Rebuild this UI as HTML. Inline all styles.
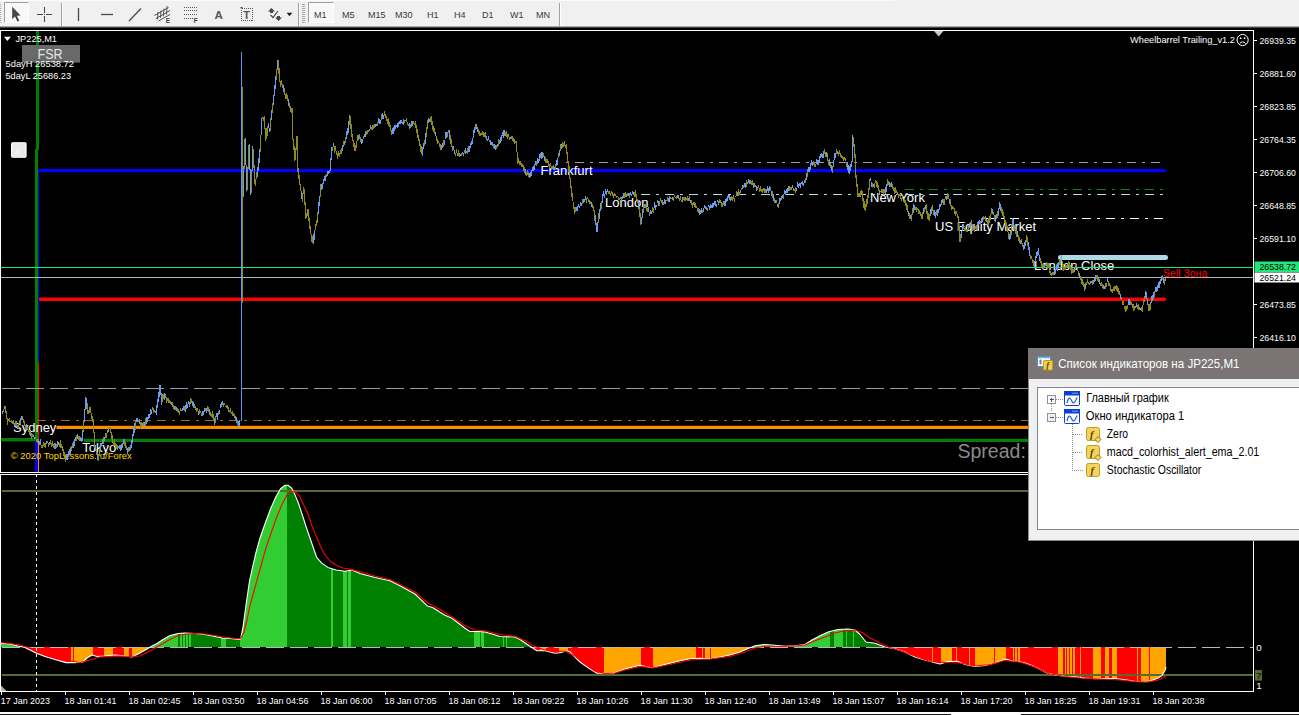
<!DOCTYPE html>
<html><head><meta charset="utf-8"><title>JP225,M1</title>
<style>
html,body{margin:0;padding:0;background:#f0f0f0;}
body{width:1299px;height:715px;position:relative;overflow:hidden;font-family:"Liberation Sans",Arial,sans-serif;}
#chart{position:absolute;left:0;top:0;}
#tb{position:absolute;left:0;top:0;width:1299px;height:26px;background:#f0f0f0;}
#tbsh{position:absolute;left:0;top:25px;width:1299px;height:3px;background:linear-gradient(#f6f6f6 0,#f6f6f6 33.3%,#a4a4a4 33.4%,#a4a4a4 66.6%,#464646 66.7%,#464646 100%);}
#tbhl{position:absolute;left:0;top:0;width:895px;height:1px;background:#fbfbfb;}
.btn{position:absolute;top:2px;height:21px;border:1px solid;border-color:#a0a0a0 #fff #fff #a0a0a0;background:#f8f8f8;box-sizing:border-box;}
.sep{position:absolute;top:3px;width:1px;height:22.5px;background:#a0a0a0;border-right:1px solid #fff;}
.tf{position:absolute;top:8.8px;font-size:9.8px;line-height:12px;transform:scaleX(.925);transform-origin:0 0;color:#3a3a3a;white-space:nowrap;}
#tabs{position:absolute;left:0;top:712px;width:1299px;height:3px;background:#fff;border-bottom:1px solid #1a1a1a;box-sizing:border-box;}
#tabs i{position:absolute;left:951px;top:0;width:70px;height:3px;background:#fff;}
#dlg{position:absolute;left:1028px;top:348px;width:272px;height:193px;background:#f0f0f0;border-left:1px solid #8a8a8a;border-bottom:1px solid #8a8a8a;box-sizing:border-box;}
#dlg .title{position:absolute;left:-1px;top:0;width:272px;height:31px;background:#7a7574;color:#fff;font-size:12.3px;}
#dlg .title span{position:absolute;left:30px;top:7.5px;line-height:14px;white-space:nowrap;}
#dlg .list{position:absolute;left:8px;top:38.5px;width:270px;height:143px;background:#fff;border:1px solid #828790;box-sizing:border-box;}
.row{position:absolute;font-size:12.1px;line-height:14px;color:#000;white-space:nowrap;}
</style></head><body>
<div id="tb"></div><div id="tbhl"></div><div id="tbsh"></div>
<svg id="chart" width="1299" height="715" viewBox="0 0 1299 715">
<rect x="0" y="28" width="1299" height="684" fill="#000"/>
<path d="M38 168.9H1164.5L1167 170.6L1164.5 172.3H38Z" fill="#0000ff"/>
<path d="M38.5 297.4H1164.5L1167 299.2L1164.5 301H38.5Z" fill="#ff0000"/>
<rect x="56.5" y="425.8" width="980" height="3.2" fill="#ff8c00"/>
<rect x="1" y="438" width="35" height="3.3" fill="#008000"/>
<rect x="84" y="438.9" width="1169" height="3.1" fill="#008000"/>
<rect x="1058" y="255" width="110" height="5" rx="2.5" fill="#add8e6"/>
<g shape-rendering="crispEdges">
<rect x="36" y="31" width="3" height="119" fill="#008000"/>
<rect x="35" y="149" width="3" height="292" fill="#008000"/>
<rect x="38" y="172" width="1" height="190" fill="#0000ff"/>
<rect x="38" y="362" width="1" height="79" fill="#ff0000"/>
<rect x="35" y="441" width="3" height="31" fill="#0000ff"/>
<rect x="38" y="441" width="1" height="31" fill="#ff8c00"/>
<rect x="241" y="52" width="1" height="369" fill="#6495ed"/>
<rect x="242" y="87" width="1" height="216" fill="#8c8720"/>
</g>
<text x="540.5" y="174.6" font-size="13" fill="#fff" font-family="Liberation Sans, Arial, sans-serif" >Frankfurt</text>
<text x="605" y="207" font-size="13" fill="#fff" font-family="Liberation Sans, Arial, sans-serif" >London</text>
<text x="870" y="202" font-size="13" fill="#fff" font-family="Liberation Sans, Arial, sans-serif" >New York</text>
<text x="935" y="231" font-size="13" fill="#fff" font-family="Liberation Sans, Arial, sans-serif" >US Equity Market</text>
<text x="1034" y="270" font-size="13" fill="#fff" font-family="Liberation Sans, Arial, sans-serif" >London Close</text>
<text x="13" y="432.4" font-size="13" fill="#fff" font-family="Liberation Sans, Arial, sans-serif" >Sydney</text>
<text x="82.3" y="452.4" font-size="13" fill="#fff" font-family="Liberation Sans, Arial, sans-serif" >Tokyo</text>
<text x="1163" y="277.3" font-size="10.5" fill="#ff0000" font-family="Liberation Sans, Arial, sans-serif" >Sell Зона</text>
<text x="10.8" y="458.7" font-size="9.3" fill="#ffd700" font-family="Liberation Sans, Arial, sans-serif" textLength="121" lengthAdjust="spacingAndGlyphs">© 2020 TopLessons.ru/Forex</text>
<g shape-rendering="crispEdges">
<rect x="0" y="30" width="1254" height="1" fill="#fff"/>
<rect x="0" y="30" width="1" height="662" fill="#fff"/>
<rect x="1253" y="30" width="1" height="662" fill="#fff"/>
<rect x="0" y="472" width="1254" height="1" fill="#fff"/>
<rect x="0" y="474" width="1254" height="1" fill="#fff"/>
<rect x="0" y="691" width="1254" height="1" fill="#fff"/>
<rect x="1" y="691" width="1" height="4" fill="#fff"/>
<rect x="65" y="691" width="1" height="4" fill="#fff"/>
<rect x="129" y="691" width="1" height="4" fill="#fff"/>
<rect x="193" y="691" width="1" height="4" fill="#fff"/>
<rect x="257" y="691" width="1" height="4" fill="#fff"/>
<rect x="321" y="691" width="1" height="4" fill="#fff"/>
<rect x="385" y="691" width="1" height="4" fill="#fff"/>
<rect x="449" y="691" width="1" height="4" fill="#fff"/>
<rect x="513" y="691" width="1" height="4" fill="#fff"/>
<rect x="577" y="691" width="1" height="4" fill="#fff"/>
<rect x="641" y="691" width="1" height="4" fill="#fff"/>
<rect x="705" y="691" width="1" height="4" fill="#fff"/>
<rect x="769" y="691" width="1" height="4" fill="#fff"/>
<rect x="833" y="691" width="1" height="4" fill="#fff"/>
<rect x="897" y="691" width="1" height="4" fill="#fff"/>
<rect x="961" y="691" width="1" height="4" fill="#fff"/>
<rect x="1025" y="691" width="1" height="4" fill="#fff"/>
<rect x="1089" y="691" width="1" height="4" fill="#fff"/>
<rect x="1153" y="691" width="1" height="4" fill="#fff"/>
<rect x="1254" y="40" width="3" height="1" fill="#fff"/>
<rect x="1254" y="73" width="3" height="1" fill="#fff"/>
<rect x="1254" y="106" width="3" height="1" fill="#fff"/>
<rect x="1254" y="139" width="3" height="1" fill="#fff"/>
<rect x="1254" y="172" width="3" height="1" fill="#fff"/>
<rect x="1254" y="205" width="3" height="1" fill="#fff"/>
<rect x="1254" y="238" width="3" height="1" fill="#fff"/>
<rect x="1254" y="304" width="3" height="1" fill="#fff"/>
<rect x="1254" y="337" width="3" height="1" fill="#fff"/>
<line x1="2" y1="388.5" x2="1253" y2="388.5" stroke="#9c9c9c" stroke-width="1" stroke-dasharray="18 6"/>
<rect x="1" y="267" width="1252" height="1" fill="#22e67a"/>
<rect x="1" y="277" width="1252" height="1" fill="#b4b4b4"/>
<line x1="37" y1="420.5" x2="1253" y2="420.5" stroke="#b0623a" stroke-width="1" stroke-dasharray="9 6 3 6"/>
<line x1="566" y1="162.5" x2="1161" y2="162.5" stroke="#a0a0a0" stroke-width="1" stroke-dasharray="9 6 3 6" stroke-dashoffset="14.75"/>
<line x1="905" y1="189.5" x2="1165" y2="189.5" stroke="#008c00" stroke-width="1" stroke-dasharray="9 6 3 6"/>
<line x1="641" y1="194.5" x2="1165" y2="194.5" stroke="#b6dce8" stroke-width="1" stroke-dasharray="9 6 3 6"/>
<line x1="986" y1="218.5" x2="1165" y2="218.5" stroke="#ffffff" stroke-width="1.4" stroke-dasharray="9 6 3 6"/>
</g>
<path d="M2.5 410.5V414.3M4.5 406.2V409.2M14.5 422.8V427.2M17.5 425.4V429.2M20.5 417.7V424.8M21.5 415.7V419.9M26.5 424.4V431.0M30.5 431.2V436.2M33.5 434.8V437.1M34.5 437.0V438.7M38.5 439.4V442.6M39.5 440.9V445.4M40.5 439.3V444.8M46.5 441.1V444.3M49.5 442.3V444.7M55.5 443.2V448.8M57.5 441.1V447.0M58.5 441.7V444.7M66.5 454.6V460.1M67.5 455.1V460.3M68.5 451.4V456.7M69.5 449.3V454.9M70.5 447.0V453.8M73.5 441.2V448.3M74.5 439.0V445.6M75.5 437.4V440.7M77.5 433.8V439.3M80.5 436.6V440.5M81.5 438.0V442.1M82.5 429.8V441.4M84.5 409.2V422.4M85.5 397.3V410.4M86.5 398.2V409.1M95.5 445.3V451.1M97.5 451.6V459.6M100.5 443.1V451.5M101.5 442.9V446.0M102.5 439.2V443.8M104.5 436.8V441.3M107.5 429.9V432.6M108.5 428.7V432.3M119.5 444.6V449.4M120.5 445.4V450.9M121.5 443.8V449.5M122.5 443.1V447.6M123.5 438.7V443.7M127.5 448.3V453.5M129.5 447.3V451.4M130.5 445.4V450.1M131.5 439.9V447.8M132.5 434.3V443.4M133.5 427.4V435.8M134.5 423.3V432.5M136.5 417.6V422.1M137.5 418.4V421.8M139.5 418.8V423.8M142.5 422.7V425.7M144.5 422.0V426.7M146.5 416.8V424.4M147.5 417.4V421.8M148.5 413.9V418.8M149.5 413.8V417.8M150.5 408.9V415.1M151.5 409.9V413.8M154.5 409.6V412.2M155.5 410.7V413.3M156.5 404.7V415.4M157.5 399.2V407.9M158.5 391.7V402.3M159.5 385.2V396.5M160.5 385.4V394.5M161.5 393.0V404.9M164.5 392.6V399.5M171.5 402.1V405.4M174.5 405.9V410.2M176.5 406.9V410.8M181.5 409.5V411.4M182.5 407.7V411.3M183.5 405.7V409.5M185.5 405.4V412.4M186.5 402.2V408.5M187.5 403.5V407.5M188.5 401.3V404.1M189.5 401.9V406.8M192.5 401.4V406.3M193.5 402.2V407.9M198.5 410.5V415.4M202.5 411.4V415.8M203.5 410.5V414.7M204.5 408.3V412.1M206.5 408.3V412.7M209.5 408.9V414.7M214.5 418.1V424.8M216.5 413.2V417.4M217.5 412.8V419.8M219.5 409.5V413.9M220.5 404.2V408.2M221.5 401.5V407.4M222.5 401.4V404.9M235.5 415.5V420.2M236.5 417.2V422.6M238.5 421.4V426.3M239.5 420.3V427.1M243.5 166.4V196.6M245.5 137.9V165.2M246.5 165.1V190.8M249.5 143.7V169.9M250.5 168.6V195.2M252.5 146.3V171.2M257.5 167.3V176.6M258.5 157.8V171.3M259.5 149.2V162.9M261.5 118.2V135.1M268.5 123.4V128.4M269.5 128.0V132.1M271.5 110.2V119.7M273.5 95.0V104.7M274.5 85.3V95.9M275.5 76.4V88.8M277.5 59.6V69.6M283.5 84.8V92.1M288.5 99.4V105.6M301.5 190.9V198.8M313.5 233.5V244.1M314.5 229.7V239.5M318.5 201.6V214.2M319.5 195.6V206.1M321.5 184.3V189.7M322.5 182.8V188.8M323.5 178.7V183.6M324.5 176.1V180.9M325.5 174.9V181.3M327.5 171.4V176.2M328.5 170.7V174.4M329.5 170.4V173.4M330.5 157.8V171.3M331.5 147.1V160.2M333.5 143.0V147.2M342.5 145.4V150.5M344.5 140.6V145.4M346.5 131.4V138.9M347.5 128.2V134.6M348.5 121.2V132.6M358.5 135.1V139.7M361.5 139.4V143.5M362.5 139.2V143.3M364.5 133.5V137.3M365.5 130.9V136.7M369.5 128.6V131.0M370.5 125.3V129.2M375.5 124.3V127.0M376.5 123.6V126.4M378.5 118.0V122.8M379.5 119.1V123.7M380.5 120.3V124.3M382.5 112.5V118.5M383.5 115.0V119.1M392.5 128.4V134.0M393.5 126.6V133.7M394.5 124.5V130.7M395.5 125.2V128.5M396.5 125.2V126.9M397.5 122.5V127.6M398.5 122.4V126.9M399.5 121.1V124.0M400.5 120.4V123.8M401.5 120.2V123.4M402.5 121.8V123.8M403.5 119.1V124.8M409.5 123.3V128.8M411.5 121.3V126.7M412.5 120.8V125.6M422.5 146.8V155.6M423.5 142.5V148.7M425.5 132.9V143.7M428.5 117.6V122.7M429.5 118.7V122.4M435.5 131.6V136.3M441.5 144.6V149.9M442.5 143.4V147.5M444.5 139.9V145.1M445.5 132.1V138.7M446.5 132.1V138.4M449.5 129.7V139.7M453.5 146.0V150.3M454.5 150.0V153.8M460.5 154.4V156.2M462.5 151.8V154.1M463.5 153.4V155.5M465.5 148.4V153.5M466.5 150.7V153.1M468.5 146.3V152.2M469.5 145.8V152.0M470.5 143.4V147.5M471.5 140.5V145.2M472.5 137.6V144.0M473.5 129.8V138.0M474.5 127.2V133.4M476.5 124.3V128.7M477.5 126.5V131.8M486.5 135.5V139.6M487.5 138.7V141.2M488.5 135.9V139.5M490.5 139.7V144.7M491.5 141.5V145.3M492.5 142.3V146.1M494.5 143.8V149.0M495.5 145.0V150.3M497.5 143.6V146.9M499.5 139.6V143.7M500.5 137.3V143.3M501.5 135.3V140.5M502.5 131.8V136.0M503.5 130.3V137.6M504.5 129.5V135.7M510.5 137.0V138.9M525.5 168.6V174.5M529.5 173.2V177.9M530.5 171.5V176.8M531.5 169.5V175.9M532.5 166.5V170.6M533.5 165.8V171.4M534.5 163.5V169.8M535.5 160.7V164.7M537.5 158.3V163.9M538.5 158.6V162.7M539.5 154.4V160.7M540.5 153.3V157.5M541.5 151.7V158.7M542.5 152.0V157.8M544.5 155.7V160.8M553.5 165.1V170.2M554.5 166.6V170.0M556.5 159.9V166.1M557.5 158.0V164.7M559.5 150.2V156.2M561.5 143.7V149.0M576.5 207.2V211.4M577.5 205.8V211.2M578.5 204.2V207.4M579.5 205.7V208.2M580.5 201.6V205.5M581.5 203.2V205.9M583.5 198.6V202.6M584.5 199.2V201.9M585.5 195.7V200.0M591.5 202.2V207.1M595.5 215.1V224.6M596.5 222.5V232.0M597.5 222.4V231.5M599.5 209.4V218.8M600.5 203.1V210.7M602.5 194.4V202.9M603.5 190.9V195.9M604.5 193.5V197.9M605.5 189.4V194.2M606.5 190.6V194.6M607.5 189.0V191.9M617.5 195.7V197.1M620.5 196.7V199.4M622.5 196.4V198.5M623.5 192.7V197.7M626.5 194.0V197.4M628.5 193.3V195.6M630.5 192.3V194.6M631.5 193.5V196.0M632.5 190.5V193.9M633.5 192.3V195.3M638.5 200.1V208.6M641.5 216.6V224.0M642.5 208.7V218.0M644.5 203.8V207.7M648.5 207.3V212.1M650.5 209.8V213.6M651.5 210.7V213.9M654.5 202.4V207.5M655.5 204.8V209.7M656.5 204.5V206.7M657.5 199.7V203.2M658.5 201.4V206.2M662.5 199.9V205.0M664.5 198.8V203.7M665.5 199.7V204.4M668.5 198.0V202.1M669.5 196.3V202.3M672.5 196.8V199.6M677.5 194.5V197.7M678.5 195.3V198.8M682.5 197.4V201.6M688.5 198.2V200.7M690.5 200.2V202.9M699.5 208.8V214.5M700.5 209.7V214.1M701.5 207.8V212.7M703.5 208.0V212.0M704.5 205.3V207.7M705.5 205.6V209.2M706.5 206.8V210.1M708.5 205.4V206.9M709.5 206.4V209.6M710.5 204.0V207.8M711.5 204.5V208.1M712.5 203.3V208.1M713.5 202.5V207.1M714.5 201.4V205.0M715.5 201.4V206.1M716.5 203.6V207.1M717.5 200.1V201.6M718.5 201.1V205.0M724.5 201.2V206.0M725.5 199.1V206.4M726.5 198.3V202.0M727.5 196.4V201.3M728.5 194.6V198.4M729.5 194.7V199.9M730.5 197.0V200.5M737.5 192.1V196.2M740.5 190.3V193.1M742.5 184.9V188.9M744.5 182.8V187.4M745.5 183.0V188.1M747.5 181.6V184.2M748.5 179.0V182.8M749.5 180.3V183.5M753.5 183.1V187.5M755.5 184.8V186.9M756.5 185.5V190.9M766.5 188.7V193.0M767.5 186.4V190.5M768.5 187.9V193.3M769.5 186.3V191.3M771.5 190.8V196.1M773.5 193.9V200.7M775.5 199.5V203.1M777.5 203.5V206.7M779.5 198.2V204.1M780.5 197.5V201.4M781.5 195.7V200.2M782.5 194.6V198.2M784.5 189.9V194.1M785.5 190.6V194.6M786.5 189.4V192.6M787.5 188.0V192.5M788.5 186.2V190.8M792.5 185.1V188.3M796.5 188.2V191.1M797.5 182.0V186.9M798.5 183.7V188.2M799.5 182.7V185.6M800.5 182.5V187.6M801.5 181.9V184.2M802.5 181.2V184.8M803.5 182.6V186.4M804.5 179.5V182.5M806.5 172.6V180.3M808.5 166.5V172.4M809.5 167.3V172.2M810.5 163.4V170.1M811.5 159.6V165.3M812.5 161.5V166.3M816.5 159.0V163.9M817.5 160.4V164.7M818.5 159.9V164.9M819.5 156.2V161.8M820.5 154.3V158.4M821.5 152.5V157.4M822.5 153.9V158.1M823.5 151.0V157.8M826.5 152.4V157.1M829.5 158.8V166.4M831.5 164.7V170.9M833.5 159.9V166.6M834.5 152.8V160.3M835.5 152.7V157.5M837.5 150.7V154.4M847.5 162.4V170.0M848.5 165.1V172.9M849.5 166.0V173.7M850.5 163.9V171.3M851.5 161.1V167.0M852.5 135.1V162.1M870.5 177.9V181.3M871.5 182.4V187.1M873.5 184.4V186.8M879.5 189.9V194.9M885.5 187.0V194.4M886.5 183.8V192.0M889.5 182.2V187.4M891.5 182.1V186.6M908.5 210.5V216.3M910.5 214.8V218.6M913.5 204.4V213.0M914.5 205.3V209.7M923.5 207.8V214.3M925.5 204.5V208.6M930.5 208.5V215.7M931.5 207.3V213.8M934.5 210.3V215.8M935.5 212.3V218.1M937.5 209.3V216.3M938.5 209.2V213.0M939.5 203.9V209.9M940.5 203.5V206.7M941.5 200.4V205.3M942.5 199.3V203.2M946.5 196.1V200.1M949.5 198.9V204.1M961.5 231.1V237.8M962.5 224.1V231.2M963.5 224.4V229.0M969.5 223.3V227.7M970.5 222.2V226.8M973.5 225.1V229.3M977.5 222.4V228.1M978.5 220.8V225.3M979.5 220.2V224.2M981.5 218.3V221.8M982.5 217.3V221.5M986.5 219.0V221.9M992.5 208.8V213.7M995.5 215.3V222.2M996.5 213.7V218.5M998.5 207.6V215.6M999.5 202.4V209.0M1000.5 204.0V211.0M1009.5 234.1V240.3M1010.5 231.4V238.8M1012.5 218.1V226.9M1013.5 219.1V225.7M1017.5 231.2V237.0M1020.5 239.8V244.3M1023.5 245.1V249.8M1024.5 241.6V249.1M1025.5 240.4V246.2M1028.5 241.5V249.8M1029.5 247.2V256.3M1034.5 260.7V266.8M1035.5 255.5V261.6M1036.5 251.8V258.3M1037.5 251.3V256.1M1038.5 248.1V254.9M1039.5 254.8V260.7M1044.5 264.4V266.6M1045.5 263.9V265.8M1054.5 270.1V275.3M1055.5 269.1V274.3M1056.5 264.6V270.4M1057.5 264.4V271.1M1058.5 262.2V266.9M1061.5 255.0V261.4M1067.5 262.6V266.7M1074.5 267.7V271.9M1076.5 264.2V267.9M1079.5 272.6V277.3M1085.5 282.5V288.5M1091.5 281.4V283.2M1093.5 279.6V284.2M1094.5 277.7V281.7M1095.5 275.4V280.7M1099.5 279.4V283.6M1103.5 284.6V289.1M1104.5 285.9V289.1M1107.5 277.8V281.8M1120.5 293.6V299.0M1128.5 299.4V304.8M1129.5 298.8V305.0M1135.5 305.5V308.3M1136.5 303.1V307.4M1140.5 307.5V310.2M1145.5 291.4V298.4M1146.5 291.7V298.6M1147.5 298.5V305.0M1151.5 295.9V303.4M1152.5 294.9V300.8M1153.5 292.2V298.7M1155.5 287.2V292.1M1156.5 286.7V292.1M1157.5 284.7V291.3M1158.5 282.0V288.4M1159.5 281.4V287.6M1160.5 279.1V284.4M1161.5 276.3V281.1M1163.5 276.9V282.9M1165.5 278.0V281.3" stroke="#6a9cf0" stroke-width="1" fill="none" shape-rendering="crispEdges"/>
<path d="M3.5 409.3V412.1M5.5 406.4V413.3M6.5 410.7V419.1M7.5 418.2V425.0M8.5 419.4V420.9M9.5 418.3V421.8M10.5 420.8V421.5M11.5 420.3V423.3M12.5 420.5V424.4M13.5 419.8V423.7M15.5 421.3V424.8M16.5 421.1V426.0M18.5 422.9V428.6M19.5 420.0V424.3M22.5 416.4V420.0M23.5 418.6V423.4M24.5 420.6V426.3M25.5 424.6V429.3M27.5 427.0V430.0M28.5 429.6V432.1M29.5 429.5V435.3M31.5 433.3V439.2M32.5 433.8V436.7M35.5 436.6V438.7M36.5 439.4V441.6M37.5 439.4V443.0M41.5 444.6V447.7M42.5 444.7V448.0M43.5 441.7V446.0M44.5 443.2V446.8M45.5 442.8V448.0M47.5 440.6V442.9M48.5 442.6V447.1M50.5 440.3V443.9M51.5 442.6V447.0M52.5 440.8V446.2M53.5 444.4V447.5M54.5 443.2V449.2M56.5 443.6V447.6M59.5 442.6V446.9M60.5 440.3V447.8M61.5 443.9V448.4M62.5 446.3V450.8M63.5 449.1V455.6M64.5 451.5V458.9M65.5 457.5V462.4M71.5 445.8V450.9M72.5 443.3V448.3M76.5 435.2V440.9M78.5 435.5V440.0M79.5 436.2V441.4M83.5 419.9V431.8M87.5 403.3V413.6M88.5 410.3V413.7M89.5 407.0V412.5M90.5 407.2V413.4M91.5 413.1V419.2M92.5 416.4V421.8M93.5 419.1V432.6M94.5 431.9V447.6M96.5 449.0V455.3M98.5 453.7V460.5M99.5 448.1V455.6M103.5 437.3V443.8M105.5 433.2V438.1M106.5 432.9V438.0M109.5 426.5V429.2M110.5 427.3V432.5M111.5 431.7V439.4M112.5 435.2V442.9M113.5 442.0V446.3M114.5 438.8V445.4M115.5 442.8V447.3M116.5 443.6V449.1M117.5 444.5V449.7M118.5 446.4V447.9M124.5 439.0V445.8M125.5 441.5V448.1M126.5 446.1V449.5M128.5 447.0V451.5M135.5 420.5V429.5M138.5 419.8V422.4M140.5 422.3V427.7M141.5 422.1V426.9M143.5 421.6V425.7M145.5 418.2V425.8M152.5 407.3V410.0M153.5 408.2V412.9M162.5 394.0V402.0M163.5 394.1V399.0M165.5 393.9V397.8M166.5 396.8V402.5M167.5 397.5V401.2M168.5 397.6V402.8M169.5 399.7V403.2M170.5 400.9V403.6M172.5 402.0V407.3M173.5 405.0V408.5M175.5 405.8V410.3M177.5 407.7V411.5M178.5 408.8V413.0M179.5 411.0V414.8M180.5 407.5V411.1M184.5 406.4V410.5M190.5 398.2V404.1M191.5 399.4V403.2M194.5 404.1V408.4M195.5 405.5V410.4M196.5 408.2V412.1M197.5 408.2V410.6M199.5 409.1V413.6M200.5 410.6V413.2M201.5 412.9V416.3M205.5 407.5V411.0M207.5 406.2V410.6M208.5 406.9V411.5M210.5 412.1V416.3M211.5 413.5V416.6M212.5 411.4V417.6M213.5 413.9V420.2M215.5 415.9V423.3M218.5 410.6V415.0M223.5 403.2V406.7M224.5 403.1V405.3M225.5 405.5V407.1M226.5 404.8V408.0M227.5 405.0V409.0M228.5 406.9V412.1M229.5 409.8V411.9M230.5 408.4V413.3M231.5 411.5V413.6M232.5 411.4V415.6M233.5 412.8V416.2M234.5 413.5V417.8M237.5 419.9V424.9M244.5 139.0V169.4M247.5 166.9V189.7M248.5 144.8V168.6M251.5 170.4V193.4M253.5 149.0V168.0M254.5 165.2V183.5M255.5 178.9V185.9M256.5 172.4V179.4M260.5 134.9V151.5M262.5 117.3V119.1M263.5 117.0V120.7M264.5 116.2V129.1M265.5 128.0V140.9M266.5 128.0V138.6M267.5 126.1V135.7M270.5 117.7V131.2M272.5 103.0V112.9M276.5 69.0V79.9M278.5 60.0V73.9M279.5 68.1V82.1M280.5 81.1V86.6M281.5 80.1V84.5M282.5 83.9V88.1M284.5 88.3V94.6M285.5 94.3V99.0M286.5 93.0V99.3M287.5 94.5V100.6M289.5 102.8V108.2M290.5 106.2V112.2M291.5 108.3V113.4M292.5 108.4V140.0M293.5 139.0V150.1M294.5 146.1V160.9M295.5 148.2V160.0M296.5 136.4V150.3M297.5 135.5V171.9M298.5 167.7V179.0M299.5 174.8V184.5M300.5 183.6V191.3M302.5 193.3V201.6M303.5 186.9V194.3M304.5 188.5V204.9M305.5 202.2V218.8M306.5 212.5V218.2M307.5 209.1V216.3M308.5 209.3V220.9M309.5 218.1V228.7M310.5 226.2V234.1M311.5 233.6V242.2M312.5 235.6V242.8M315.5 223.7V229.6M316.5 219.9V225.9M317.5 211.5V223.1M320.5 184.4V197.2M326.5 173.5V177.1M332.5 146.8V151.2M334.5 146.3V152.9M335.5 146.4V151.0M336.5 150.9V154.6M337.5 152.9V158.5M338.5 151.3V156.1M339.5 152.5V157.2M340.5 149.7V154.3M341.5 147.9V154.0M343.5 141.1V147.3M345.5 136.8V143.3M349.5 115.0V124.8M350.5 116.2V129.4M351.5 124.0V136.5M352.5 133.5V141.2M353.5 140.2V146.5M354.5 143.2V150.7M355.5 144.6V151.3M356.5 140.8V148.2M357.5 134.9V141.2M359.5 133.7V138.7M360.5 137.2V142.2M363.5 136.1V139.0M366.5 131.0V134.7M367.5 130.1V133.9M368.5 130.2V131.7M371.5 126.8V130.3M372.5 125.3V130.1M373.5 125.1V128.8M374.5 124.0V128.0M377.5 121.5V125.6M381.5 114.2V119.7M384.5 111.0V116.4M385.5 113.6V118.3M386.5 115.6V121.4M387.5 119.0V123.6M388.5 118.3V125.9M389.5 122.4V127.4M390.5 125.2V130.7M391.5 129.6V134.6M404.5 120.3V123.0M405.5 119.6V121.1M406.5 118.1V122.2M407.5 121.6V124.9M408.5 124.1V126.1M410.5 123.8V127.8M413.5 120.9V124.2M414.5 122.6V124.7M415.5 120.8V127.7M416.5 125.0V133.1M417.5 129.1V138.3M418.5 135.3V140.8M419.5 138.5V146.2M420.5 143.7V152.0M421.5 146.0V154.0M424.5 139.5V146.3M426.5 126.5V137.4M427.5 120.1V128.8M430.5 117.1V121.8M431.5 116.4V124.6M432.5 121.4V130.1M433.5 125.5V131.6M434.5 128.0V133.6M436.5 136.4V140.6M437.5 138.8V143.7M438.5 140.8V143.1M439.5 142.5V147.3M440.5 144.1V149.8M443.5 139.7V146.6M447.5 131.9V136.9M448.5 129.8V132.6M450.5 134.9V143.8M451.5 139.0V146.7M452.5 145.6V150.6M455.5 153.3V156.0M456.5 149.3V153.1M457.5 152.5V155.9M458.5 150.3V155.7M459.5 153.4V157.2M461.5 153.2V155.9M464.5 149.9V153.3M467.5 147.8V154.0M475.5 123.5V130.1M478.5 128.9V134.4M479.5 130.7V135.5M480.5 133.3V135.5M481.5 132.5V134.9M482.5 131.1V134.6M483.5 131.5V136.5M484.5 132.8V136.6M485.5 132.1V138.3M489.5 139.9V141.9M493.5 144.3V148.0M496.5 144.7V148.9M498.5 139.4V145.9M505.5 131.8V135.9M506.5 131.0V136.7M507.5 133.5V138.7M508.5 133.5V136.6M509.5 136.7V139.9M511.5 136.3V139.3M512.5 136.1V141.1M513.5 138.3V141.9M514.5 139.2V143.7M515.5 140.6V143.2M516.5 140.9V151.9M517.5 152.3V163.8M518.5 157.5V162.5M519.5 160.8V164.9M520.5 160.9V164.7M521.5 162.7V167.4M522.5 163.8V167.3M523.5 165.2V171.2M524.5 167.1V172.7M526.5 172.0V175.6M527.5 169.5V175.2M528.5 171.9V177.4M536.5 161.0V166.3M543.5 153.0V157.2M545.5 157.0V162.6M546.5 158.9V162.6M547.5 159.3V163.2M548.5 161.1V165.8M549.5 164.4V167.7M550.5 163.4V166.2M551.5 166.0V170.2M552.5 165.6V168.7M555.5 163.5V169.3M558.5 152.6V157.6M560.5 144.4V151.3M562.5 142.0V148.1M563.5 143.0V146.8M564.5 141.3V145.8M565.5 144.9V147.7M566.5 143.7V154.3M567.5 152.4V163.3M568.5 160.7V171.8M569.5 169.3V179.2M570.5 177.7V187.7M571.5 186.4V197.1M572.5 192.9V200.7M573.5 201.9V209.1M574.5 207.0V214.1M575.5 206.9V212.3M582.5 199.3V204.0M586.5 198.1V203.3M587.5 197.4V199.1M588.5 199.4V202.3M589.5 200.3V204.0M590.5 200.7V204.4M592.5 204.2V208.4M593.5 206.0V211.4M594.5 210.4V220.5M598.5 212.5V222.5M601.5 200.5V208.7M608.5 190.8V193.9M609.5 190.8V193.7M610.5 193.3V196.0M611.5 190.8V194.1M612.5 192.2V195.6M613.5 193.7V197.9M614.5 193.2V195.9M615.5 193.7V195.7M616.5 195.7V197.7M618.5 196.6V199.6M619.5 197.5V200.0M621.5 196.7V200.8M624.5 193.1V197.8M625.5 192.3V197.3M627.5 192.7V195.9M629.5 193.0V198.0M634.5 191.7V196.5M635.5 190.4V196.5M636.5 193.8V199.7M637.5 199.0V203.3M639.5 205.7V216.5M640.5 212.8V224.9M643.5 205.5V212.6M645.5 204.0V208.3M646.5 206.7V211.2M647.5 207.8V212.3M649.5 211.7V215.6M652.5 206.6V212.2M653.5 207.9V212.8M659.5 200.5V205.8M660.5 197.8V201.4M661.5 199.6V202.9M663.5 202.1V204.6M666.5 199.5V201.3M667.5 197.4V200.9M670.5 196.7V199.0M671.5 198.3V199.4M673.5 197.1V201.0M674.5 194.6V196.6M675.5 197.0V198.3M676.5 195.6V198.9M679.5 198.2V200.5M680.5 196.4V199.8M681.5 199.9V202.0M683.5 196.8V200.2M684.5 197.4V200.6M685.5 197.2V201.2M686.5 197.5V199.7M687.5 195.9V200.7M689.5 196.4V200.8M691.5 200.4V204.5M692.5 203.3V208.0M693.5 202.0V205.4M694.5 202.3V206.9M695.5 203.2V208.4M696.5 206.2V208.3M697.5 208.3V211.5M698.5 207.5V213.0M702.5 210.2V212.8M707.5 208.0V210.6M719.5 199.2V202.6M720.5 199.6V203.4M721.5 202.3V206.9M722.5 203.1V206.8M723.5 201.4V205.1M731.5 196.2V199.6M732.5 197.4V201.0M733.5 194.6V198.7M734.5 198.0V201.6M735.5 196.1V197.3M736.5 191.4V196.0M738.5 189.4V195.5M739.5 192.2V194.8M741.5 188.3V190.0M743.5 184.5V187.5M746.5 180.4V186.6M750.5 179.5V184.1M751.5 181.1V185.4M752.5 180.0V184.9M754.5 182.7V187.2M757.5 186.8V190.3M758.5 184.5V188.0M759.5 188.0V191.9M760.5 186.3V190.7M761.5 188.9V192.0M762.5 189.3V192.6M763.5 187.5V190.6M764.5 188.4V192.5M765.5 189.1V192.7M770.5 187.0V190.8M772.5 190.7V197.9M774.5 198.0V203.1M776.5 199.7V203.1M778.5 203.4V207.9M783.5 194.2V198.8M789.5 185.7V190.7M790.5 187.4V190.1M791.5 187.1V190.2M793.5 188.3V190.8M794.5 188.8V191.0M795.5 186.8V192.5M805.5 177.8V183.1M807.5 169.2V176.5M813.5 160.9V165.3M814.5 162.1V166.6M815.5 164.4V166.9M824.5 149.2V153.9M825.5 151.9V156.5M827.5 153.1V160.7M828.5 160.1V165.1M830.5 163.1V168.3M832.5 165.7V172.8M836.5 149.0V154.3M838.5 151.7V155.5M839.5 150.1V153.9M840.5 153.4V157.0M841.5 154.8V157.9M842.5 155.5V159.0M843.5 156.5V161.1M844.5 156.5V160.0M845.5 157.5V161.0M846.5 161.8V167.3M853.5 136.9V147.2M854.5 143.7V158.3M855.5 154.4V178.2M856.5 175.0V187.0M857.5 184.4V196.5M858.5 192.9V197.2M859.5 193.2V197.1M860.5 191.2V196.7M861.5 190.0V194.6M862.5 191.2V201.2M863.5 198.3V207.8M864.5 200.5V210.0M865.5 204.4V211.3M866.5 199.2V207.1M867.5 195.0V204.3M868.5 187.8V197.6M869.5 178.7V190.4M872.5 183.1V186.6M874.5 183.3V187.6M875.5 179.8V183.1M876.5 181.1V186.7M877.5 181.6V187.9M878.5 185.2V191.3M880.5 190.9V192.1M881.5 189.0V192.5M882.5 188.9V193.4M883.5 189.2V194.7M884.5 189.4V193.0M887.5 178.8V185.6M888.5 180.9V185.0M890.5 182.9V187.1M892.5 183.5V188.8M893.5 187.1V191.0M894.5 188.1V193.6M895.5 186.7V192.7M896.5 189.7V193.2M897.5 192.1V195.0M898.5 194.1V198.1M899.5 193.8V196.4M900.5 194.8V199.2M901.5 197.7V200.5M902.5 195.9V199.0M903.5 199.6V202.2M904.5 197.5V202.7M905.5 199.8V205.9M906.5 202.6V210.0M907.5 204.6V212.1M909.5 213.0V218.5M911.5 213.5V221.1M912.5 208.1V215.3M915.5 207.1V210.2M916.5 207.0V211.8M917.5 207.5V210.2M918.5 208.6V214.2M919.5 210.3V214.1M920.5 212.0V216.3M921.5 214.1V219.3M922.5 211.9V218.7M924.5 207.4V212.0M926.5 203.8V213.8M927.5 211.3V219.0M928.5 212.6V220.0M929.5 213.9V221.2M932.5 204.8V210.5M933.5 210.1V214.6M936.5 210.3V214.8M943.5 199.2V205.2M944.5 198.6V204.5M945.5 196.4V198.6M947.5 193.1V199.0M948.5 193.9V199.0M950.5 199.3V206.3M951.5 205.1V210.0M952.5 205.6V209.0M953.5 206.7V209.1M954.5 207.8V214.4M955.5 210.5V215.7M956.5 211.3V213.9M957.5 213.7V218.0M958.5 215.6V230.9M959.5 226.1V241.5M960.5 234.1V241.7M964.5 227.6V230.6M965.5 227.0V231.1M966.5 228.9V232.2M967.5 229.0V232.1M968.5 224.9V230.4M971.5 219.5V224.7M972.5 224.3V230.5M974.5 227.7V232.2M975.5 225.6V229.4M976.5 225.1V229.7M980.5 220.5V224.1M983.5 216.1V219.6M984.5 216.7V219.3M985.5 216.3V220.9M987.5 219.5V225.2M988.5 217.9V224.6M989.5 215.5V223.3M990.5 214.4V219.7M991.5 208.3V214.4M993.5 211.5V215.0M994.5 214.6V221.2M997.5 211.1V218.0M1001.5 206.9V213.0M1002.5 208.5V215.7M1003.5 211.9V217.6M1004.5 215.6V222.5M1005.5 219.6V226.9M1006.5 224.6V230.9M1007.5 225.7V231.7M1008.5 232.1V239.0M1011.5 224.3V234.5M1014.5 224.6V231.0M1015.5 228.5V234.4M1016.5 229.8V236.6M1018.5 234.8V240.9M1019.5 236.9V242.6M1021.5 239.0V244.0M1022.5 242.5V247.1M1026.5 234.5V241.8M1027.5 236.9V245.8M1030.5 255.3V258.5M1031.5 256.2V259.4M1032.5 259.3V263.0M1033.5 260.4V266.2M1040.5 257.5V263.0M1041.5 261.4V267.6M1042.5 263.7V266.9M1043.5 263.8V269.1M1046.5 262.2V265.5M1047.5 262.6V268.5M1048.5 262.8V268.2M1049.5 266.4V272.5M1050.5 270.6V275.0M1051.5 272.5V275.9M1052.5 271.7V275.3M1053.5 272.1V275.1M1059.5 258.5V265.3M1060.5 259.6V265.4M1062.5 260.7V267.7M1063.5 263.8V271.2M1064.5 266.5V270.0M1065.5 264.8V270.3M1066.5 265.3V267.9M1068.5 261.0V265.7M1069.5 261.5V267.5M1070.5 265.3V269.8M1071.5 267.5V273.5M1072.5 269.0V273.3M1073.5 269.2V272.5M1075.5 264.3V268.3M1077.5 266.9V271.1M1078.5 270.7V276.0M1080.5 275.9V280.1M1081.5 276.9V283.5M1082.5 278.7V284.6M1083.5 281.7V287.3M1084.5 284.2V290.8M1086.5 281.7V284.9M1087.5 278.6V282.6M1088.5 282.3V283.8M1089.5 282.7V285.1M1090.5 280.6V284.1M1092.5 280.4V285.3M1096.5 274.7V279.1M1097.5 274.7V280.8M1098.5 278.2V282.3M1100.5 282.6V285.6M1101.5 282.3V285.9M1102.5 283.7V287.7M1105.5 283.0V289.2M1106.5 282.7V286.5M1108.5 280.5V286.2M1109.5 282.7V286.4M1110.5 284.9V290.6M1111.5 288.9V292.3M1112.5 288.8V292.9M1113.5 286.5V291.2M1114.5 285.5V290.7M1115.5 285.9V289.0M1116.5 285.0V290.5M1117.5 285.9V291.6M1118.5 287.5V294.3M1119.5 291.0V295.1M1121.5 296.6V299.9M1122.5 300.9V304.5M1123.5 301.4V305.3M1124.5 306.0V309.4M1125.5 305.7V311.7M1126.5 306.4V310.7M1127.5 305.2V308.5M1130.5 301.1V304.5M1131.5 301.6V305.3M1132.5 304.0V307.6M1133.5 304.1V311.0M1134.5 306.3V310.0M1137.5 305.1V308.6M1138.5 304.2V309.6M1139.5 306.6V309.9M1141.5 307.4V311.4M1142.5 304.9V311.9M1143.5 299.2V305.1M1144.5 295.5V301.7M1148.5 303.7V311.2M1149.5 304.0V311.0M1150.5 302.2V309.5M1154.5 291.4V297.3M1162.5 275.1V279.6M1164.5 278.7V284.5" stroke="#8f8a1e" stroke-width="1" fill="none" shape-rendering="crispEdges"/>
<g shape-rendering="crispEdges">
</g>
<path d="M1.0 647.0L1.0 643.3L10.0 644.0L18.0 646.0L25.0 647.4L25.0 647.0ZM150.0 647.0L150.0 647.2L152.0 646.0L157.0 643.5L163.0 639.5L170.0 635.5L178.0 633.5L178.0 647.0ZM180.0 647.0L180.0 633.4L181.5 633.2L181.5 647.0ZM183.0 647.0L183.0 633.1L184.5 633.0L184.5 647.0ZM186.0 647.0L186.0 633.0L187.5 633.1L187.5 647.0ZM189.0 647.0L189.0 633.2L191.0 633.3L191.0 647.0ZM221.0 647.0L221.0 637.8L222.0 638.0L226.0 638.2L226.0 647.0ZM240.0 647.0L240.0 639.5L240.7 638.6L243.0 627.0L245.0 612.6L247.0 598.0L249.5 581.4L252.6 567.0L256.0 552.5L260.0 538.0L265.0 523.7L270.4 509.3L275.7 497.2L280.5 488.8L285.0 485.2L287.0 485.2L287.0 647.0ZM331.0 647.0L331.0 568.4L333.4 569.2L333.4 647.0ZM343.0 647.0L343.0 571.0L345.0 571.3L346.5 571.0L346.5 647.0ZM347.5 647.0L347.5 570.8L351.0 570.2L351.0 647.0ZM474.0 647.0L474.0 631.5L478.0 631.5L479.5 631.6L479.5 647.0ZM480.5 647.0L480.5 631.7L483.5 631.9L483.5 647.0ZM502.5 647.0L502.5 636.6L504.0 636.6L504.0 647.0ZM505.5 647.0L505.5 636.7L506.5 636.7L506.5 647.0ZM751.0 647.0L751.0 647.3L755.0 645.7L765.0 644.5L775.0 645.2L785.0 646.2L795.0 645.7L805.0 644.5L812.0 640.0L820.0 635.7L828.0 632.0L830.0 631.5L830.0 647.0ZM834.0 647.0L834.0 630.5L838.0 629.5L843.0 629.2L843.0 647.0ZM846.0 647.0L846.0 629.1L847.0 629.0L847.0 647.0ZM853.0 647.0L853.0 629.7L854.0 629.9L854.0 647.0Z" fill="#32cd32" shape-rendering="crispEdges"/>
<path d="M25.0 647.0L25.0 647.4L36.0 653.0L45.0 656.5L55.0 659.5L66.0 662.6L71.0 662.6L71.0 647.0ZM72.5 647.0L72.5 662.6L74.0 662.6L74.0 647.0ZM93.0 647.0L93.0 655.3L97.0 656.5L104.0 656.1L104.0 647.0ZM113.0 647.0L113.0 655.2L115.0 655.0L124.0 655.9L124.0 647.0ZM129.0 647.0L129.0 656.6L132.0 657.0L132.0 647.0ZM531.0 647.0L531.0 646.8L537.0 650.7L540.0 650.7L540.0 647.0ZM546.0 647.0L546.0 651.0L555.0 653.2L559.0 652.8L559.0 647.0ZM568.0 647.0L568.0 651.1L570.0 652.0L580.0 662.0L590.0 669.0L597.0 673.2L603.5 673.2L603.5 647.0ZM640.5 647.0L640.5 665.3L650.0 667.5L652.5 667.7L652.5 647.0ZM696.0 647.0L696.0 658.4L700.0 658.2L702.0 658.3L702.0 647.0ZM703.0 647.0L703.0 658.4L704.5 658.4L704.5 647.0ZM709.5 647.0L709.5 658.7L710.0 658.7L711.0 658.5L711.0 647.0ZM886.0 647.0L886.0 647.2L895.0 648.7L905.0 652.0L915.0 657.0L925.0 660.0L932.0 661.9L932.0 647.0ZM933.0 647.0L933.0 662.2L935.0 662.7L940.0 664.0L940.5 663.8L940.5 647.0ZM951.5 647.0L951.5 661.4L956.0 661.2L956.0 647.0ZM957.0 647.0L957.0 661.2L965.0 664.5L969.0 665.3L969.0 647.0ZM970.0 647.0L970.0 665.5L975.0 666.5L975.0 647.0ZM994.0 647.0L994.0 663.2L995.0 663.0L995.0 647.0ZM1006.0 647.0L1006.0 659.4L1007.0 659.2L1012.0 661.0L1012.5 661.0L1012.5 647.0ZM1014.0 647.0L1014.0 661.2L1015.0 661.3L1015.0 647.0ZM1016.5 647.0L1016.5 661.4L1017.5 661.5L1017.5 647.0ZM1019.5 647.0L1019.5 661.7L1020.0 661.7L1025.0 663.0L1032.0 665.5L1040.0 669.2L1047.0 673.0L1055.0 675.0L1057.5 675.3L1057.5 647.0ZM1063.0 647.0L1063.0 676.0L1064.5 676.1L1064.5 647.0ZM1066.0 647.0L1066.0 676.2L1067.0 676.3L1067.0 647.0ZM1068.5 647.0L1068.5 676.4L1070.0 676.5L1070.0 647.0ZM1071.5 647.0L1071.5 676.5L1072.5 676.6L1072.5 647.0ZM1075.0 647.0L1075.0 676.7L1079.5 677.3L1079.5 647.0ZM1081.0 647.0L1081.0 677.5L1085.0 678.0L1093.0 678.6L1093.0 647.0ZM1100.5 647.0L1100.5 678.6L1105.0 678.5L1105.0 647.0ZM1108.5 647.0L1108.5 678.5L1112.0 678.5L1112.0 647.0ZM1117.0 647.0L1117.0 678.7L1125.0 679.7L1135.0 681.2L1137.0 681.3L1137.0 647.0ZM1138.0 647.0L1138.0 681.4L1141.0 681.5L1141.0 647.0ZM1149.0 647.0L1149.0 681.0L1150.0 680.8L1150.0 647.0Z" fill="#ff0000" shape-rendering="crispEdges"/>
<path d="M71.0 647.0L71.0 662.6L72.5 662.6L72.5 647.0ZM74.0 647.0L74.0 662.6L75.0 662.6L83.0 662.0L87.0 658.0L92.0 655.0L93.0 655.3L93.0 647.0ZM104.0 647.0L104.0 656.1L105.0 656.0L113.0 655.2L113.0 647.0ZM124.0 647.0L124.0 655.9L125.0 656.0L129.0 656.6L129.0 647.0ZM132.0 647.0L132.0 657.0L140.0 653.0L147.0 649.0L150.0 647.2L150.0 647.0ZM540.0 647.0L540.0 650.7L545.0 650.7L546.0 651.0L546.0 647.0ZM559.0 647.0L559.0 652.8L560.0 652.7L567.0 650.7L568.0 651.1L568.0 647.0ZM603.5 647.0L603.5 673.2L613.0 673.2L625.0 669.0L640.0 665.2L640.5 665.3L640.5 647.0ZM652.5 647.0L652.5 667.7L653.0 667.7L660.0 665.7L670.0 663.2L680.0 660.7L690.0 658.7L696.0 658.4L696.0 647.0ZM702.0 647.0L702.0 658.3L703.0 658.4L703.0 647.0ZM704.5 647.0L704.5 658.4L709.5 658.7L709.5 647.0ZM711.0 647.0L711.0 658.5L720.0 657.0L730.0 655.0L740.0 652.0L750.0 647.7L751.0 647.3L751.0 647.0ZM932.0 647.0L932.0 661.9L933.0 662.2L933.0 647.0ZM940.5 647.0L940.5 663.8L948.0 661.5L951.5 661.4L951.5 647.0ZM956.0 647.0L956.0 661.2L957.0 661.2L957.0 647.0ZM969.0 647.0L969.0 665.3L970.0 665.5L970.0 647.0ZM975.0 647.0L975.0 666.5L985.0 665.5L994.0 663.2L994.0 647.0ZM995.0 647.0L995.0 663.0L1003.0 660.0L1006.0 659.4L1006.0 647.0ZM1012.5 647.0L1012.5 661.0L1014.0 661.2L1014.0 647.0ZM1015.0 647.0L1015.0 661.3L1016.5 661.4L1016.5 647.0ZM1017.5 647.0L1017.5 661.5L1019.5 661.7L1019.5 647.0ZM1057.5 647.0L1057.5 675.3L1063.0 676.0L1063.0 647.0ZM1064.5 647.0L1064.5 676.1L1065.0 676.2L1066.0 676.2L1066.0 647.0ZM1067.0 647.0L1067.0 676.3L1068.5 676.4L1068.5 647.0ZM1070.0 647.0L1070.0 676.5L1071.5 676.5L1071.5 647.0ZM1072.5 647.0L1072.5 676.6L1075.0 676.7L1075.0 647.0ZM1079.5 647.0L1079.5 677.3L1081.0 677.5L1081.0 647.0ZM1093.0 647.0L1093.0 678.6L1095.0 678.7L1100.5 678.6L1100.5 647.0ZM1105.0 647.0L1105.0 678.5L1108.5 678.5L1108.5 647.0ZM1112.0 647.0L1112.0 678.5L1115.0 678.5L1117.0 678.7L1117.0 647.0ZM1137.0 647.0L1137.0 681.3L1138.0 681.4L1138.0 647.0ZM1141.0 647.0L1141.0 681.5L1145.0 681.7L1149.0 681.0L1149.0 647.0ZM1150.0 647.0L1150.0 680.8L1152.0 680.5L1158.0 678.0L1162.0 675.5L1165.0 670.5L1166.0 667.0L1166.0 647.0Z" fill="#ffa500" shape-rendering="crispEdges"/>
<path d="M178.0 647.0L178.0 633.5L180.0 633.4L180.0 647.0ZM181.5 647.0L181.5 633.2L183.0 633.1L183.0 647.0ZM184.5 647.0L184.5 633.0L185.0 633.0L186.0 633.0L186.0 647.0ZM187.5 647.0L187.5 633.1L189.0 633.2L189.0 647.0ZM191.0 647.0L191.0 633.3L195.0 633.5L205.0 634.5L215.0 636.5L221.0 637.8L221.0 647.0ZM226.0 647.0L226.0 638.2L230.0 638.5L240.0 639.5L240.0 647.0ZM287.0 647.0L287.0 485.2L288.0 485.2L291.5 488.0L294.5 493.6L298.0 502.0L302.0 514.0L306.7 528.5L311.7 543.0L316.6 557.3L322.0 563.4L328.0 567.4L331.0 568.4L331.0 647.0ZM333.4 647.0L333.4 569.2L336.0 570.0L343.0 571.0L343.0 647.0ZM346.5 647.0L346.5 571.0L347.5 570.8L347.5 647.0ZM351.0 647.0L351.0 570.2L352.0 570.0L360.0 573.5L375.0 577.5L390.0 580.7L400.0 585.7L415.0 594.0L427.0 605.7L433.0 607.7L445.0 615.2L452.0 618.2L465.0 628.2L470.0 631.5L474.0 631.5L474.0 647.0ZM479.5 647.0L479.5 631.6L480.5 631.7L480.5 647.0ZM483.5 647.0L483.5 631.9L485.0 632.0L492.0 634.0L500.0 636.5L502.5 636.6L502.5 647.0ZM504.0 647.0L504.0 636.6L505.5 636.7L505.5 647.0ZM506.5 647.0L506.5 636.7L515.0 637.0L520.0 639.5L530.0 646.2L531.0 646.8L531.0 647.0ZM830.0 647.0L830.0 631.5L834.0 630.5L834.0 647.0ZM843.0 647.0L843.0 629.2L846.0 629.1L846.0 647.0ZM847.0 647.0L847.0 629.0L848.0 629.0L853.0 629.7L853.0 647.0ZM854.0 647.0L854.0 629.9L855.0 630.0L860.0 634.5L866.0 642.0L875.0 643.2L885.0 647.0L886.0 647.2L886.0 647.0Z" fill="#008000" shape-rendering="crispEdges"/>
<line x1="2" y1="647.5" x2="1253" y2="647.5" stroke="#b8b8b8" stroke-width="1" stroke-dasharray="18 6" shape-rendering="crispEdges"/>
<rect x="2" y="674" width="1251" height="2" fill="#556b2f" shape-rendering="crispEdges"/>
<rect x="2" y="490" width="1251" height="2" fill="#556b2f" shape-rendering="crispEdges"/>
<path d="M1.0 643.3L10.0 644.0L18.0 646.0L25.0 647.4L36.0 653.0L45.0 656.5L55.0 659.5L66.0 662.6L75.0 662.6L83.0 662.0L87.0 658.0L92.0 655.0L97.0 656.5L105.0 656.0L115.0 655.0L125.0 656.0L132.0 657.0L140.0 653.0L147.0 649.0L152.0 646.0L157.0 643.5L163.0 639.5L170.0 635.5L178.0 633.5L185.0 633.0L195.0 633.5L205.0 634.5L215.0 636.5L222.0 638.0L230.0 638.5L240.0 639.5L240.7 638.6L243.0 627.0L245.0 612.6L247.0 598.0L249.5 581.4L252.6 567.0L256.0 552.5L260.0 538.0L265.0 523.7L270.4 509.3L275.7 497.2L280.5 488.8L285.0 485.2L288.0 485.2L291.5 488.0L294.5 493.6L298.0 502.0L302.0 514.0L306.7 528.5L311.7 543.0L316.6 557.3L322.0 563.4L328.0 567.4L336.0 570.0L345.0 571.3L352.0 570.0L360.0 573.5L375.0 577.5L390.0 580.7L400.0 585.7L415.0 594.0L427.0 605.7L433.0 607.7L445.0 615.2L452.0 618.2L465.0 628.2L470.0 631.5L478.0 631.5L485.0 632.0L492.0 634.0L500.0 636.5L515.0 637.0L520.0 639.5L530.0 646.2L537.0 650.7L545.0 650.7L555.0 653.2L560.0 652.7L567.0 650.7L570.0 652.0L580.0 662.0L590.0 669.0L597.0 673.2L613.0 673.2L625.0 669.0L640.0 665.2L650.0 667.5L653.0 667.7L660.0 665.7L670.0 663.2L680.0 660.7L690.0 658.7L700.0 658.2L710.0 658.7L720.0 657.0L730.0 655.0L740.0 652.0L750.0 647.7L755.0 645.7L765.0 644.5L775.0 645.2L785.0 646.2L795.0 645.7L805.0 644.5L812.0 640.0L820.0 635.7L828.0 632.0L838.0 629.5L848.0 629.0L855.0 630.0L860.0 634.5L866.0 642.0L875.0 643.2L885.0 647.0L895.0 648.7L905.0 652.0L915.0 657.0L925.0 660.0L935.0 662.7L940.0 664.0L948.0 661.5L957.0 661.2L965.0 664.5L975.0 666.5L985.0 665.5L995.0 663.0L1003.0 660.0L1007.0 659.2L1012.0 661.0L1020.0 661.7L1025.0 663.0L1032.0 665.5L1040.0 669.2L1047.0 673.0L1055.0 675.0L1065.0 676.2L1075.0 676.7L1085.0 678.0L1095.0 678.7L1105.0 678.5L1115.0 678.5L1125.0 679.7L1135.0 681.2L1145.0 681.7L1152.0 680.5L1158.0 678.0L1162.0 675.5L1165.0 670.5L1166.0 667.0" stroke="#fff" stroke-width="1.1" fill="none" stroke-linejoin="round"/>
<path d="M1.0 642.5L10.0 643.5L20.0 645.0L30.0 648.0L40.0 652.0L50.0 655.5L60.0 658.5L70.0 661.0L80.0 662.5L90.0 660.0L100.0 657.0L110.0 656.5L120.0 656.0L130.0 656.5L140.0 656.0L148.0 652.0L155.0 648.0L162.0 644.0L170.0 639.5L178.0 635.5L186.0 634.0L195.0 633.5L205.0 634.0L215.0 635.5L225.0 637.2L235.0 638.5L240.7 638.6L244.0 632.0L247.0 620.0L250.0 605.4L254.0 591.0L258.0 576.6L262.0 562.0L266.0 547.7L271.0 533.3L276.0 519.0L282.0 504.4L287.0 494.8L291.0 491.2L296.0 492.4L300.0 497.2L304.0 505.6L308.0 514.0L312.0 526.0L316.0 535.7L320.5 546.5L325.0 555.0L330.0 561.0L336.0 565.0L343.0 568.0L352.0 569.6L362.0 572.3L375.0 576.0L390.0 579.5L400.0 584.5L415.0 592.0L427.0 602.5L440.0 609.5L452.0 617.0L465.0 625.7L475.0 630.0L485.0 630.7L495.0 633.2L505.0 635.2L515.0 636.2L525.0 640.7L535.0 646.5L545.0 650.0L555.0 652.0L565.0 651.0L575.0 656.0L585.0 664.0L595.0 671.0L605.0 673.5L615.0 673.0L625.0 670.0L640.0 666.5L655.0 667.5L670.0 664.5L690.0 660.0L710.0 659.0L730.0 656.5L745.0 652.0L755.0 648.0L765.0 646.0L780.0 646.5L795.0 646.0L805.0 645.0L815.0 640.7L825.0 637.0L835.0 633.0L845.0 630.7L855.0 630.0L862.0 632.5L870.0 638.0L880.0 643.0L888.0 647.0L900.0 650.5L915.0 656.0L930.0 661.5L945.0 662.5L960.0 663.0L975.0 666.0L990.0 664.5L1005.0 660.5L1020.0 662.0L1035.0 667.0L1050.0 674.0L1065.0 676.5L1080.0 678.0L1100.0 679.0L1120.0 680.0L1135.0 681.5L1148.0 682.0L1158.0 680.0L1166.0 676.0" stroke="#ff0000" stroke-width="1.1" fill="none" stroke-linejoin="round"/>
<line x1="36.5" y1="474" x2="36.5" y2="691" stroke="#fff" stroke-width="1" stroke-dasharray="3 3" shape-rendering="crispEdges"/>
<rect x="0" y="473" width="1" height="1" fill="#000"/>
<path d="M1 685.5L6.5 691H1Z" fill="#b0b0b0"/>
<path d="M934 31H943.5L938.7 36.5Z" fill="#c8c8c8"/>
<path d="M4 36.8H10.8L7.4 41Z" fill="#fff"/>
<rect x="1255" y="670" width="7" height="10.6" fill="#556b2f"/>
<rect x="1254.5" y="261.5" width="45" height="10.7" fill="#22e67a"/>
<rect x="1254.5" y="272.5" width="45" height="10" fill="#fff"/>
<rect x="22" y="45" width="58" height="17.6" fill="#696969"/>
<rect x="11.5" y="142.7" width="14.6" height="14.6" rx="0.8" fill="#e9e9e9" stroke="#fff" stroke-width="1"/>
<text x="1259.5" y="43.6" font-size="9.8" fill="#fff" font-family="Liberation Sans, Arial, sans-serif" textLength="36.5" lengthAdjust="spacingAndGlyphs">26939.35</text>
<text x="1259.5" y="76.6" font-size="9.8" fill="#fff" font-family="Liberation Sans, Arial, sans-serif" textLength="36.5" lengthAdjust="spacingAndGlyphs">26881.60</text>
<text x="1259.5" y="109.6" font-size="9.8" fill="#fff" font-family="Liberation Sans, Arial, sans-serif" textLength="36.5" lengthAdjust="spacingAndGlyphs">26823.85</text>
<text x="1259.5" y="142.6" font-size="9.8" fill="#fff" font-family="Liberation Sans, Arial, sans-serif" textLength="36.5" lengthAdjust="spacingAndGlyphs">26764.35</text>
<text x="1259.5" y="175.6" font-size="9.8" fill="#fff" font-family="Liberation Sans, Arial, sans-serif" textLength="36.5" lengthAdjust="spacingAndGlyphs">26706.60</text>
<text x="1259.5" y="208.6" font-size="9.8" fill="#fff" font-family="Liberation Sans, Arial, sans-serif" textLength="36.5" lengthAdjust="spacingAndGlyphs">26648.85</text>
<text x="1259.5" y="241.6" font-size="9.8" fill="#fff" font-family="Liberation Sans, Arial, sans-serif" textLength="36.5" lengthAdjust="spacingAndGlyphs">26591.10</text>
<text x="1259.5" y="307.6" font-size="9.8" fill="#fff" font-family="Liberation Sans, Arial, sans-serif" textLength="36.5" lengthAdjust="spacingAndGlyphs">26473.85</text>
<text x="1259.5" y="340.6" font-size="9.8" fill="#fff" font-family="Liberation Sans, Arial, sans-serif" textLength="36.5" lengthAdjust="spacingAndGlyphs">26416.10</text>
<text x="1259.5" y="270.4" font-size="9.8" fill="#000" font-family="Liberation Sans, Arial, sans-serif" textLength="36.5" lengthAdjust="spacingAndGlyphs">26538.72</text>
<text x="1259.5" y="280.9" font-size="9.8" fill="#000" font-family="Liberation Sans, Arial, sans-serif" textLength="36.5" lengthAdjust="spacingAndGlyphs">26521.24</text>
<text x="1256.3" y="651" font-size="9.8" fill="#fff" font-family="Liberation Sans, Arial, sans-serif" >0</text>
<text x="1256.3" y="679.2" font-size="9.8" fill="#111" font-family="Liberation Sans, Arial, sans-serif" >7</text>
<text x="1256.3" y="688.5" font-size="9.8" fill="#fff" font-family="Liberation Sans, Arial, sans-serif" >1</text>
<text x="0.8" y="703.9" font-size="9.8" fill="#fff" font-family="Liberation Sans, Arial, sans-serif" textLength="49.2" lengthAdjust="spacingAndGlyphs">17 Jan 2023</text>
<text x="64.6" y="703.9" font-size="9.8" fill="#fff" font-family="Liberation Sans, Arial, sans-serif" textLength="52" lengthAdjust="spacingAndGlyphs">18 Jan 01:41</text>
<text x="128.6" y="703.9" font-size="9.8" fill="#fff" font-family="Liberation Sans, Arial, sans-serif" textLength="52" lengthAdjust="spacingAndGlyphs">18 Jan 02:45</text>
<text x="192.6" y="703.9" font-size="9.8" fill="#fff" font-family="Liberation Sans, Arial, sans-serif" textLength="52" lengthAdjust="spacingAndGlyphs">18 Jan 03:50</text>
<text x="256.6" y="703.9" font-size="9.8" fill="#fff" font-family="Liberation Sans, Arial, sans-serif" textLength="52" lengthAdjust="spacingAndGlyphs">18 Jan 04:56</text>
<text x="320.6" y="703.9" font-size="9.8" fill="#fff" font-family="Liberation Sans, Arial, sans-serif" textLength="52" lengthAdjust="spacingAndGlyphs">18 Jan 06:00</text>
<text x="384.6" y="703.9" font-size="9.8" fill="#fff" font-family="Liberation Sans, Arial, sans-serif" textLength="52" lengthAdjust="spacingAndGlyphs">18 Jan 07:05</text>
<text x="448.6" y="703.9" font-size="9.8" fill="#fff" font-family="Liberation Sans, Arial, sans-serif" textLength="52" lengthAdjust="spacingAndGlyphs">18 Jan 08:12</text>
<text x="512.6" y="703.9" font-size="9.8" fill="#fff" font-family="Liberation Sans, Arial, sans-serif" textLength="52" lengthAdjust="spacingAndGlyphs">18 Jan 09:22</text>
<text x="576.6" y="703.9" font-size="9.8" fill="#fff" font-family="Liberation Sans, Arial, sans-serif" textLength="52" lengthAdjust="spacingAndGlyphs">18 Jan 10:26</text>
<text x="640.6" y="703.9" font-size="9.8" fill="#fff" font-family="Liberation Sans, Arial, sans-serif" textLength="52" lengthAdjust="spacingAndGlyphs">18 Jan 11:30</text>
<text x="704.6" y="703.9" font-size="9.8" fill="#fff" font-family="Liberation Sans, Arial, sans-serif" textLength="52" lengthAdjust="spacingAndGlyphs">18 Jan 12:40</text>
<text x="768.6" y="703.9" font-size="9.8" fill="#fff" font-family="Liberation Sans, Arial, sans-serif" textLength="52" lengthAdjust="spacingAndGlyphs">18 Jan 13:49</text>
<text x="832.6" y="703.9" font-size="9.8" fill="#fff" font-family="Liberation Sans, Arial, sans-serif" textLength="52" lengthAdjust="spacingAndGlyphs">18 Jan 15:07</text>
<text x="896.6" y="703.9" font-size="9.8" fill="#fff" font-family="Liberation Sans, Arial, sans-serif" textLength="52" lengthAdjust="spacingAndGlyphs">18 Jan 16:14</text>
<text x="960.6" y="703.9" font-size="9.8" fill="#fff" font-family="Liberation Sans, Arial, sans-serif" textLength="52" lengthAdjust="spacingAndGlyphs">18 Jan 17:20</text>
<text x="1024.6" y="703.9" font-size="9.8" fill="#fff" font-family="Liberation Sans, Arial, sans-serif" textLength="52" lengthAdjust="spacingAndGlyphs">18 Jan 18:25</text>
<text x="1088.6" y="703.9" font-size="9.8" fill="#fff" font-family="Liberation Sans, Arial, sans-serif" textLength="52" lengthAdjust="spacingAndGlyphs">18 Jan 19:31</text>
<text x="1152.6" y="703.9" font-size="9.8" fill="#fff" font-family="Liberation Sans, Arial, sans-serif" textLength="52" lengthAdjust="spacingAndGlyphs">18 Jan 20:38</text>
<text x="15.5" y="42" font-size="9.8" fill="#fff" font-family="Liberation Sans, Arial, sans-serif" textLength="41.5" lengthAdjust="spacingAndGlyphs">JP225,M1</text>
<text x="37.5" y="59" font-size="14" fill="#e6e6e6" font-family="Liberation Sans, Arial, sans-serif" textLength="25"  lengthAdjust="spacingAndGlyphs">FSR</text>
<text x="5.5" y="67.2" font-size="9.8" fill="#fff" font-family="Liberation Sans, Arial, sans-serif" textLength="68.5" lengthAdjust="spacingAndGlyphs">5dayH 26538.72</text>
<text x="5.5" y="78.8" font-size="9.8" fill="#fff" font-family="Liberation Sans, Arial, sans-serif" textLength="65.5" lengthAdjust="spacingAndGlyphs">5dayL 25686.23</text>
<text x="15.4" y="153.6" font-size="9.5" fill="#fafafa" font-family="Liberation Sans, Arial, sans-serif" >v</text>
<text x="1130" y="42.8" font-size="9.8" fill="#fff" font-family="Liberation Sans, Arial, sans-serif" textLength="105" lengthAdjust="spacingAndGlyphs">Wheelbarrel Trailing_v1.2</text>
<g stroke="#fff" fill="none" stroke-width="1"><circle cx="1242.6" cy="40" r="5.6"/><path d="M1239.6 43.6Q1242.6 40.2 1245.6 43.6"/></g><circle cx="1240.6" cy="38.2" r="0.85" fill="#fff"/><circle cx="1244.6" cy="38.2" r="0.85" fill="#fff"/>
<text x="957.5" y="458" font-size="19.5" fill="#8a8a8a" font-family="Liberation Sans, Arial, sans-serif" >Spread:</text>
</svg>
<div id="tabs"><i></i></div>
<div class="btn" style="left:4px;width:25px;"></div>
<div class="btn" style="left:308px;width:26px;"></div>
<div class="sep" style="left:61px;"></div>
<div class="sep" style="left:298px;"></div>
<div class="sep" style="left:559px;"></div>
<svg id="tbi" width="600" height="26" viewBox="0 0 600 26" style="position:absolute;left:0;top:0;">
 <g shape-rendering="crispEdges" fill="#a8a8a8">
  <rect x="0" y="4" width="1" height="1"/><rect x="0" y="6" width="1" height="1"/><rect x="0" y="8" width="1" height="1"/><rect x="0" y="10" width="1" height="1"/><rect x="0" y="12" width="1" height="1"/><rect x="0" y="14" width="1" height="1"/><rect x="0" y="16" width="1" height="1"/><rect x="0" y="18" width="1" height="1"/><rect x="0" y="20" width="1" height="1"/><rect x="0" y="22" width="1" height="1"/>
  <rect x="302" y="4" width="3" height="1"/><rect x="302" y="6" width="3" height="1"/><rect x="302" y="8" width="3" height="1"/><rect x="302" y="10" width="3" height="1"/><rect x="302" y="12" width="3" height="1"/><rect x="302" y="14" width="3" height="1"/><rect x="302" y="16" width="3" height="1"/><rect x="302" y="18" width="3" height="1"/><rect x="302" y="20" width="3" height="1"/><rect x="302" y="22" width="3" height="1"/>
 </g>
 <!-- cursor arrow -->
 <path d="M12.2 6.8V19.2L15 16.6L17.4 21.6L19.3 20.7L16.9 15.8L20.6 15.4Z" fill="#464646"/>
 <!-- crosshair -->
 <g stroke="#4a4a4a" stroke-width="1.1" fill="none">
  <path d="M37 14.5H43M46 14.5H52M44.5 7V13M44.5 16V22"/>
  <path d="M44 14.5H45" stroke-width="1"/>
  <!-- vline / hline / diag -->
  <path d="M78.5 8V21" stroke-width="1.3"/>
  <path d="M101 14.5H113" stroke-width="1.3"/>
  <path d="M129 21L141 8.5" stroke-width="1.3"/>
 </g>
 <!-- channel icon -->
 <g stroke="#505050" stroke-width="1" fill="none">
  <path d="M154.5 15.5L168.5 7.5M156 18.5L170 10.5M158.5 21L170 14.5"/>
  <path d="M158 12L157.5 19.5M161 10.5L160.5 18M164 8.5L163.5 16.5M167 6L166.5 14.5"/>
 </g>
 <text x="165.8" y="23.2" font-size="6.5" font-weight="bold" font-family="Liberation Sans, Arial, sans-serif" fill="#404040">E</text>
 <!-- fib icon -->
 <g stroke="#585858" stroke-width="1" stroke-dasharray="1 1" shape-rendering="crispEdges">
  <path d="M184 7.5H197M184 10.5H197M184 14.5H197M184 18.5H193"/>
 </g>
 <text x="193.8" y="23.2" font-size="6.5" font-weight="bold" font-family="Liberation Sans, Arial, sans-serif" fill="#404040">F</text>
 <!-- A -->
 <text x="214.6" y="18.8" font-size="11.5" font-weight="bold" font-family="Liberation Sans, Arial, sans-serif" fill="#555">A</text>
 <!-- T box -->
 <rect x="241.5" y="8.5" width="11" height="12" fill="none" stroke="#555" stroke-width="1" stroke-dasharray="1 1" shape-rendering="crispEdges"/>
 <rect x="240.5" y="7" width="2" height="1.5" fill="#444"/>
 <text x="243.2" y="19" font-size="11" font-weight="bold" font-family="Liberation Sans, Arial, sans-serif" fill="#555">T</text>
 <!-- arrows -->
 <path d="M271.5 8L275 11.5H273V13H270V11.5H268Z" fill="#484848"/>
 <path d="M278.5 21L282 17.5H280V16H277V17.5H275Z" fill="#484848"/>
 <path d="M270.5 15L273 17.5L278 11" stroke="#484848" stroke-width="1.2" fill="none"/>
 <path d="M286.6 12.8H292.4L289.5 16.3Z" fill="#222"/>
</svg>
<span class="tf" style="left:313.6px;">M1</span>
<span class="tf" style="left:341.9px;">M5</span>
<span class="tf" style="left:367.6px;">M15</span>
<span class="tf" style="left:395.4px;">M30</span>
<span class="tf" style="left:426.5px;">H1</span>
<span class="tf" style="left:453.5px;">H4</span>
<span class="tf" style="left:482.3px;">D1</span>
<span class="tf" style="left:509.6px;">W1</span>
<span class="tf" style="left:536px;">MN</span>

<div id="dlg">
 <div class="title">
  <svg width="18" height="18" viewBox="0 0 18 18" style="position:absolute;left:9px;top:6.5px;">
   <rect x="0.5" y="1.5" width="13" height="10" rx="1" fill="#f4f8fc" stroke="#4a94cc" stroke-width="1"/>
   <rect x="1" y="2" width="12" height="1.2" fill="#7ab4e0"/>
   <path d="M3.5 4.5V9.5M2 6H5M2 8H5" stroke="#6a7a8a" stroke-width="0.9"/>
   <rect x="6.5" y="5.5" width="9" height="9.5" rx="1.2" fill="#f2cf4e" stroke="#c89a14" stroke-width="1"/>
   <text x="9.2" y="13" font-size="8.5" font-style="italic" font-weight="bold" font-family="Liberation Serif, serif" fill="#5a4a20">f</text>
  </svg>
 </div>
 <div class="list"></div>
 <svg width="120" height="110" viewBox="0 0 120 110" style="position:absolute;left:9px;top:38px;">
  <!-- origin = (1038,386) page -->
  <g stroke="#909090" stroke-width="1" stroke-dasharray="1 1" shape-rendering="crispEdges" fill="none">
   <path d="M13.5 18V26M18 13.5H25M18 31.5H25"/>
   <path d="M34.5 38V84.5H45M34.5 48.5H45M34.5 66.5H45"/>
  </g>
  <!-- plus/minus boxes -->
  <g shape-rendering="crispEdges">
   <rect x="9.5" y="9.5" width="8" height="8" fill="#fff" stroke="#919191"/>
   <path d="M11.5 13.5H16M13.5 11.5V16" stroke="#3a4fa0" stroke-width="1"/>
   <rect x="9.5" y="27.5" width="8" height="8" fill="#eee" stroke="#919191"/>
   <path d="M11.5 31.5H16" stroke="#3a4fa0" stroke-width="1"/>
  </g>
  <!-- window icons -->
  <g id="wi">
   <rect x="26.5" y="5.5" width="15" height="14" rx="1" fill="#fff" stroke="#0a3fd8" stroke-width="1"/>
   <rect x="26.5" y="5.5" width="15" height="3.5" fill="#0a3fd8" stroke="#0a3fd8"/>
   <rect x="34.5" y="6.7" width="1" height="1" fill="#fff"/><rect x="36.5" y="6.7" width="1" height="1" fill="#fff"/><rect x="38.5" y="6.7" width="1" height="1" fill="#fff"/>
   <path d="M29 17C30.5 11 32 11 33.5 14.5S36.5 18 39 11.5" stroke="#3b62c8" stroke-width="1.3" fill="none"/>
  </g>
  <g transform="translate(0,18)">
   <rect x="26.5" y="5.5" width="15" height="14" rx="1" fill="#fff" stroke="#0a3fd8" stroke-width="1"/>
   <rect x="26.5" y="5.5" width="15" height="3.5" fill="#0a3fd8" stroke="#0a3fd8"/>
   <rect x="34.5" y="6.7" width="1" height="1" fill="#fff"/><rect x="36.5" y="6.7" width="1" height="1" fill="#fff"/><rect x="38.5" y="6.7" width="1" height="1" fill="#fff"/>
   <path d="M29 17C30.5 11 32 11 33.5 14.5S36.5 18 39 11.5" stroke="#3b62c8" stroke-width="1.3" fill="none"/>
  </g>
  <!-- f icons -->
  <g font-family="Liberation Serif, serif" font-style="italic" font-weight="bold" font-size="10.5" fill="#5a4000">
   <rect x="48.5" y="41.5" width="13" height="13" rx="2" fill="#f4d45c" stroke="#c09a2c"/>
   <text x="52" y="52">f</text>
   <path d="M60 50.5L63 53.5L60 56.5L57 53.5Z" fill="#f6d65c" stroke="#8a6a10" stroke-width="0.9"/>
   <rect x="48.5" y="59.5" width="13" height="13" rx="2" fill="#f4d45c" stroke="#c09a2c"/>
   <text x="52" y="70">f</text>
   <path d="M60 68.5L63 71.5L60 74.5L57 71.5Z" fill="#f6d65c" stroke="#8a6a10" stroke-width="0.9"/>
   <rect x="48.5" y="77.5" width="13" height="13" rx="2" fill="#f4d45c" stroke="#c09a2c"/>
   <text x="52.5" y="88">f</text>
  </g>
 </svg>
 <svg width="271" height="193" viewBox="1028 348 271 193" style="position:absolute;left:-1px;top:0;" font-family="Liberation Sans, Arial, sans-serif" font-size="12" fill="#000">
  <text x="1086.2" y="402.3" textLength="82.5" lengthAdjust="spacingAndGlyphs">Главный график</text>
  <text x="1085.8" y="420.3" textLength="98.5" lengthAdjust="spacingAndGlyphs">Окно индикатора 1</text>
  <text x="1106.8" y="438.3" textLength="21.3" lengthAdjust="spacingAndGlyphs">Zero</text>
  <text x="1106.8" y="456.3" textLength="152.5" lengthAdjust="spacingAndGlyphs">macd_colorhist_alert_ema_2.01</text>
  <text x="1106.8" y="474.3" textLength="94.5" lengthAdjust="spacingAndGlyphs">Stochastic Oscillator</text>
  <text x="1058.2" y="368" font-size="12.4" fill="#fff" textLength="181.3" lengthAdjust="spacingAndGlyphs">Список индикаторов на JP225,M1</text>
 </svg>
</div>

</body></html>
